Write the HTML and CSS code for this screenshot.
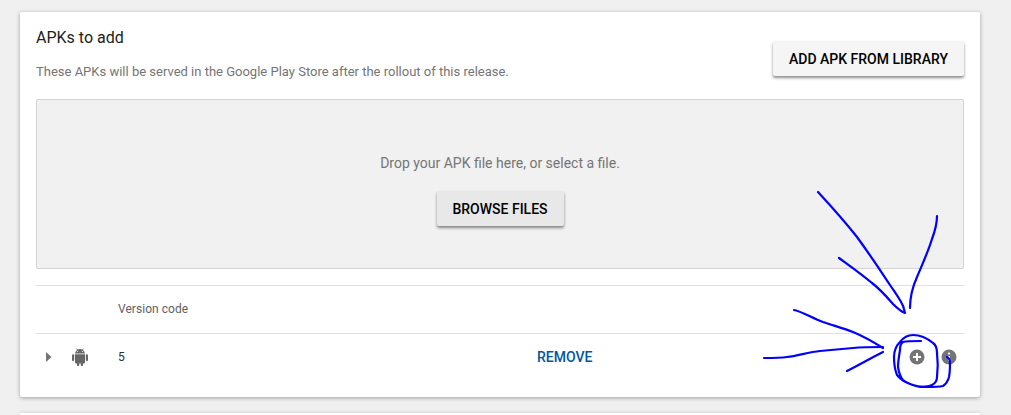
FILE: index.html
```html
<!DOCTYPE html>
<html lang="en">
<head>
<meta charset="utf-8">
<title>APKs to add</title>
<link rel="stylesheet" href="styles.css">
</head>
<body>
<main class="page">
  <section class="card">
    <div class="head">
      <div class="head-text">
        <h2 class="title">APKs to add</h2>
        <p class="desc">These APKs will be served in the Google Play Store after the rollout of this release.</p>
      </div>
      <button class="btn btn-light">ADD APK FROM LIBRARY</button>
    </div>
    <div class="drop">
      <p class="drop-text">Drop your APK file here, or select a file.</p>
      <button class="btn btn-grey">BROWSE FILES</button>
    </div>
    <div class="table">
      <div class="row row-head">
        <span class="col-exp"></span>
        <span class="col-icon"></span>
        <span class="col-code">Version code</span>
      </div>
      <div class="row row-body">
        <span class="col-exp"><svg class="caret" width="6" height="10" viewBox="0 0 6 10"><path d="M0 0L5.5 5L0 10Z"/></svg></span>
        <span class="col-icon"><svg class="android" width="16" height="18" viewBox="0 0 16 18"><path d="M3 6.2h10v8.2a1 1 0 0 1-1 1h-1v1.6a1.1 1.1 0 0 1-2.2 0v-1.6H7.2v1.6a1.1 1.1 0 0 1-2.2 0v-1.6H4a1 1 0 0 1-1-1z"/><rect x="0" y="6.2" width="2.2" height="7" rx="1.1"/><rect x="13.8" y="6.2" width="2.2" height="7" rx="1.1"/><path d="M3 5.5a5 5 0 0 1 2.2-3.6L4.3.6l.4-.3 1 1.3a5 5 0 0 1 4.6 0l1-1.3.4.3-.9 1.3A5 5 0 0 1 13 5.5z"/><circle cx="5.7" cy="3.5" r=".6" fill="#fff"/><circle cx="10.3" cy="3.5" r=".6" fill="#fff"/></svg></span>
        <span class="col-code num">5</span>
        <a class="remove">REMOVE</a>
        <span class="actions">
          <svg class="act" width="16" height="16" viewBox="0 0 16 16"><circle cx="8" cy="8" r="7.5" fill="#757575"/><path d="M8 4v8M4 8h8" stroke="#fff" stroke-width="2"/></svg>
          <svg class="act" width="16" height="16" viewBox="0 0 16 16"><circle cx="8" cy="8" r="7.5" fill="#757575"/><path d="M8 7v5" stroke="#fff" stroke-width="2"/><circle cx="8" cy="4.6" r="1.1" fill="#fff"/></svg>
        </span>
      </div>
    </div>
  </section>
  <section class="card next"></section>
</main>
<svg class="ink" width="1011" height="415" viewBox="0 0 1011 415" fill="none" stroke="#0000ff" stroke-width="2.2" stroke-linecap="round" stroke-linejoin="round">
  <path d="M818 192C830 205 842 218 857 237C873 259 882 273 890 285C896 294 903 303 904 309L905 313C900 311 897 308 893 304C886 296 880 289 872 283C860 273 850 266 839 258"/>
  <path d="M937 216C937 224 935 231 932 239C928 252 922 265 917 277C912 288 910 298 910 308"/>
  <path d="M794 310C803 312 812 318 823 322C835 326 845 329 853 332C865 337 875 343 883 348"/>
  <path d="M764 358C772 358 780 358 787 357C798 356 808 352 820 351C832 350 843 349 853 348C863 347 873 347 883 347"/>
  <path d="M847 371C859 365 871 358 883 352"/>
  <path d="M921 341C914 341 907 341 903 342C900 344 900 347 900 350C899 356 898 362 898 367C899 373 900 377 903 380C908 384 914 386 920 387C925 387 929 387 932 385C936 383 937 380 937 377C938 369 938 361 937 353C937 349 936 345 933 343C927 338 920 335 913 335C907 335 903 338 900 342C896 346 894 351 894 357C894 364 895 370 897 375C900 379 905 382 910 384C915 386 921 387 927 387C932 387 938 387 943 386C946 384 948 381 949 377C950 372 950 368 950 363C950 360 949 358 947 357"/>
</svg>
</body>
</html>
```
FILE: styles.css
```css
* { box-sizing: border-box; }
html, body { margin: 0; height: 415px; overflow: hidden; }
body {
  background: #f0f0f0;
  font-family: Roboto, "Liberation Sans", sans-serif;
  color: #212121;
}
.page { height: 415px; overflow: hidden; padding: 12px 31px 0 20px; display: flex; flex-direction: column; gap: 16px; }
.card {
  background: #fff;
  border-radius: 2px;
  box-shadow: 0 1px 4px rgba(0,0,0,.35);
  padding: 16px 16px 0;
  height: 385px;
  flex: none;
}
.next { height: 2px; padding: 0; }
.head { display: flex; justify-content: space-between; align-items: flex-start; height: 71px; }
.title { margin: 0; font-size: 16px; font-weight: 400; line-height: 19px; color: #212121; }
.desc { margin: 17px 0 0; font-size: 13px; line-height: 16px; color: #757575; }
.btn {
  border: 0;
  border-radius: 2px;
  height: 35px;
  font-family: inherit;
  font-size: 14px;
  font-weight: 500;
  color: #000;
  box-shadow: 0 2px 3px rgba(0,0,0,.45);
  padding: 0 16px;
}
.btn-light { background: #f5f5f5; margin-top: 13px; }
.btn-grey { background: #e8e8e8; width: 127px; padding: 0; }
.drop {
  background: #f1f1f1;
  border: 1px solid #d4d4d4;
  border-radius: 2px;
  height: 170px;
  display: flex;
  flex-direction: column;
  align-items: center;
  padding-top: 54px;
}
.drop-text { margin: 0 0 19px; font-size: 14px; line-height: 18px; color: #757575; }
.table { margin-top: 16px; border-top: 1px solid #e0e0e0; }
.row { display: flex; align-items: center; }
.row-head { height: 48px; padding-bottom: 2px; border-bottom: 1px solid #e0e0e0; }
.row-body { height: 47px; padding-bottom: 1px; }
.col-exp { width: 36px; padding-left: 10px; display: flex; align-items: center; flex: none; }
.col-icon { width: 46px; display: flex; align-items: center; flex: none; }
.col-code { font-size: 12px; color: #616161; line-height: 16px; letter-spacing: .05px; width: 419px; flex: none; }
.num { color: #263238; }
.caret { fill: #757575; }
.android { fill: #666; }
.remove { font-size: 14px; font-weight: 500; color: #01579b; }
.actions { margin-left: auto; display: flex; gap: 16px; padding-right: 7px; }
.ink { position: absolute; left: 0; top: 0; pointer-events: none; }
```
